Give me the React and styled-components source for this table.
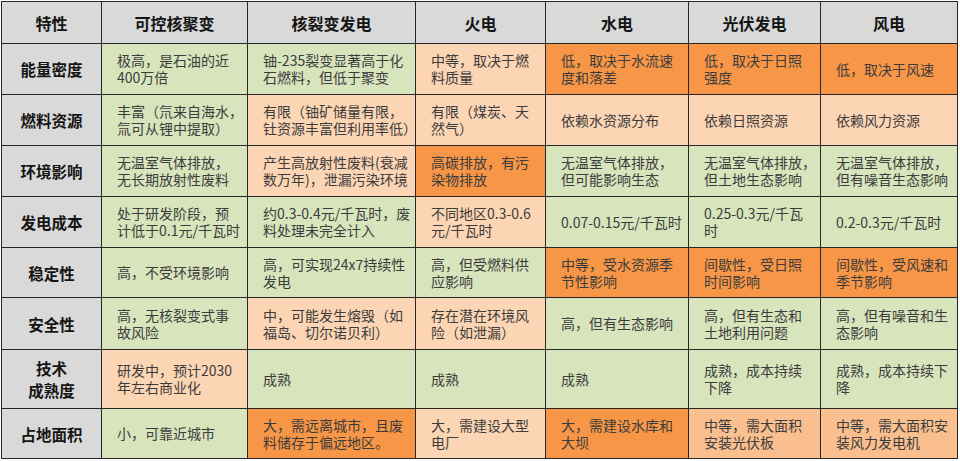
import styled, { createGlobalStyle } from 'styled-components';

const GlobalStyle = createGlobalStyle`
  html, body {
    margin: 0;
    padding: 0;
    background: #e4e4e4;
  }
  body {
    font-family: "Noto Sans CJK SC", "Noto Sans", sans-serif;
  }
`;

const widths = [100, 146, 168, 130, 143, 132, 137];
const heights = [51, 51, 51, 51, 50, 52, 59, 50];

const tones = {
  g: '#d8e4bc',
  l: '#fcd5b4',
  o: '#f79646',
  m: '#fabf8f',
};

const headers = ['特性', '可控核聚变', '核裂变发电', '火电', '水电', '光伏发电', '风电'];

const rows = [
  {
    label: ['能量密度'],
    cells: [
      ['g', '极高，是石油的近', '400万倍'],
      ['g', '铀-235裂变显著高于化', '石燃料，但低于聚变'],
      ['l', '中等，取决于燃', '料质量'],
      ['o', '低，取决于水流速', '度和落差'],
      ['o', '低，取决于日照', '强度'],
      ['o', '低，取决于风速'],
    ],
  },
  {
    label: ['燃料资源'],
    cells: [
      ['g', '丰富（氘来自海水，', '氚可从锂中提取）'],
      ['l', '有限（铀矿储量有限，', '钍资源丰富但利用率低）'],
      ['l', '有限（煤炭、天', '然气）'],
      ['l', '依赖水资源分布'],
      ['l', '依赖日照资源'],
      ['l', '依赖风力资源'],
    ],
  },
  {
    label: ['环境影响'],
    cells: [
      ['g', '无温室气体排放，', '无长期放射性废料'],
      ['l', '产生高放射性废料(衰减', '数万年)，泄漏污染环境'],
      ['o', '高碳排放，有污', '染物排放'],
      ['g', '无温室气体排放，', '但可能影响生态'],
      ['g', '无温室气体排放，', '但土地生态影响'],
      ['g', '无温室气体排放，', '但有噪音生态影响'],
    ],
  },
  {
    label: ['发电成本'],
    cells: [
      ['g', '处于研发阶段，预', '计低于0.1元/千瓦时'],
      ['g', '约0.3-0.4元/千瓦时，废', '料处理未完全计入'],
      ['l', '不同地区0.3-0.6', '元/千瓦时'],
      ['g', '0.07-0.15元/千瓦时'],
      ['g', '0.25-0.3元/千瓦', '时'],
      ['g', '0.2-0.3元/千瓦时'],
    ],
  },
  {
    label: ['稳定性'],
    cells: [
      ['g', '高，不受环境影响'],
      ['g', '高，可实现24x7持续性', '发电'],
      ['g', '高，但受燃料供', '应影响'],
      ['o', '中等，受水资源季', '节性影响'],
      ['o', '间歇性，受日照', '时间影响'],
      ['o', '间歇性，受风速和', '季节影响'],
    ],
  },
  {
    label: ['安全性'],
    cells: [
      ['g', '高，无核裂变式事', '故风险'],
      ['l', '中，可能发生熔毁（如', '福岛、切尔诺贝利）'],
      ['l', '存在潜在环境风', '险（如泄漏）'],
      ['g', '高，但有生态影响'],
      ['g', '高，但有生态和', '土地利用问题'],
      ['g', '高，但有噪音和生', '态影响'],
    ],
  },
  {
    label: ['技术', '成熟度'],
    cells: [
      ['l', '研发中，预计2030', '年左右商业化'],
      ['g', '成熟'],
      ['g', '成熟'],
      ['g', '成熟'],
      ['g', '成熟，成本持续', '下降'],
      ['g', '成熟，成本持续下', '降'],
    ],
  },
  {
    label: ['占地面积'],
    cells: [
      ['g', '小，可靠近城市'],
      ['o', '大，需远离城市，且废', '料储存于偏远地区。'],
      ['l', '大，需建设大型', '电厂'],
      ['o', '大，需建设水库和', '大坝'],
      ['m', '中等，需大面积', '安装光伏板'],
      ['m', '中等，需大面积安', '装风力发电机'],
    ],
  },
];

export default function App() {
  return (
    <>
      <GlobalStyle />
      <Page>
        <Table>
          <colgroup>
            {widths.map((w, i) => (
              <col key={i} style={{ width: w }} />
            ))}
          </colgroup>
          <thead>
            <Row $height={42}>
              {headers.map((h) => (
                <HeadCell key={h}>{h}</HeadCell>
              ))}
            </Row>
          </thead>
          <tbody>
            {rows.map((row, r) => (
              <Row key={r} $height={heights[r]}>
                <LabelCell>
                  {row.label.map((t) => (
                    <Line key={t}>{t}</Line>
                  ))}
                </LabelCell>
                {row.cells.map(([tone, ...lines], c) => (
                  <Cell key={c} $tone={tone}>
                    {lines.map((t) => (
                      <Line key={t}>{t}</Line>
                    ))}
                  </Cell>
                ))}
              </Row>
            ))}
          </tbody>
        </Table>
      </Page>
    </>
  );
}

const Page = styled.div`
  padding: 1px 0 0 1px;
  width: 959px;
  height: 460px;
  background: #ffffff;
`;

const Table = styled.table`
  border-collapse: collapse;
  table-layout: fixed;
  width: 956px;
`;

const Row = styled.tr`
  height: ${(p) => p.$height}px;
`;

const HeadCell = styled.th`
  background: #d9d9d9;
  border: 1px solid #262626;
  color: #151515;
  font-size: 16px;
  font-weight: 700;
  text-align: center;
  vertical-align: middle;
  padding: 0;
  white-space: nowrap;
`;

const LabelCell = styled.td`
  background: #d9d9d9;
  border: 1px solid #262626;
  color: #151515;
  font-size: 15.5px;
  font-weight: 700;
  line-height: 22px;
  text-align: center;
  vertical-align: middle;
  padding: 0;
  white-space: nowrap;
`;

const Cell = styled.td`
  background: ${(p) => tones[p.$tone]};
  border: 1px solid #262626;
  color: #3c3c3c;
  font-size: 14px;
  line-height: 17px;
  text-align: left;
  vertical-align: middle;
  padding: 0 0 0 15px;
  white-space: nowrap;
  overflow: visible;
`;

const Line = styled.div`
  display: block;
`;
